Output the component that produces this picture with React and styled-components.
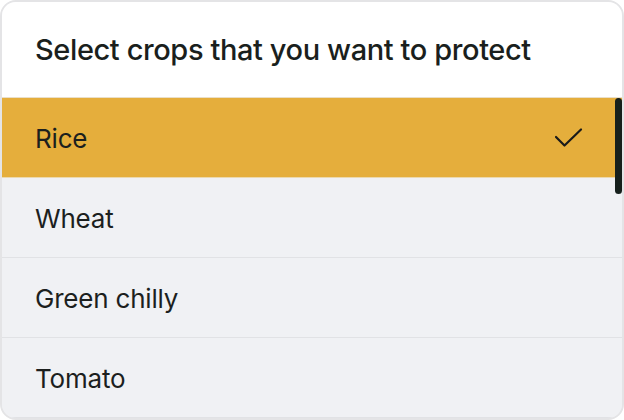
import React from 'react'
import styled, { createGlobalStyle } from 'styled-components';

const GlobalStyle = createGlobalStyle`
  html, body {
    margin: 0;
    padding: 0;
    background: #ffffff;
  }
  body {
    font-family: Inter, "Noto Sans", sans-serif;
    -webkit-font-smoothing: antialiased;
  }
`;

const Card = styled.div`
  width: 624px;
  height: 420px;
  box-sizing: border-box;
  border: 2px solid #e4e4e6;
  border-radius: 16px;
  overflow: hidden;
  display: flex;
  flex-direction: column;
  background: #f0f1f4;
`;

const Header = styled.div`
  height: 95px;
  flex-shrink: 0;
  background: #ffffff;
  border-bottom: 1px solid #eadfc9;
  display: flex;
  align-items: center;
  padding: 0 33px;
`;

const Title = styled.h1`
  margin: 0;
  font-size: 29px;
  font-weight: 500;
  letter-spacing: -0.4px;
  color: #1a1f1d;
`;

const List = styled.div`
  position: relative;
  flex: 1;
  display: flex;
  flex-direction: column;
`;

const Option = styled.div`
  height: 80px;
  box-sizing: border-box;
  flex-shrink: 0;
  display: flex;
  align-items: center;
  justify-content: space-between;
  padding: 1px 38px 0 33px;
  background: ${p => (p.$selected ? '#e5ae3c' : '#f0f1f4')};
  border-bottom: 1px solid ${p => (p.$selected ? '#ecd9ae' : '#e1e2e5')};
  &:last-child {
    border-bottom: none;
  }
`;

const Label = styled.span`
  font-size: 26px;
  font-weight: 400;
  letter-spacing: -0.2px;
  color: #1c1f1e;
`;

const Scrollbar = styled.div`
  position: absolute;
  top: 0;
  right: 0;
  width: 7px;
  height: 96px;
  border-radius: 4px;
  background: #16201c;
`;

const CheckIcon = () => (
  <svg width="30" height="22" viewBox="0 0 30 22" fill="none">
    <polyline
      points="2,10 10.5,18.5 27,2.5"
      stroke="#1a1a1a"
      strokeWidth="2.2"
      strokeLinecap="round"
      strokeLinejoin="round"
    />
  </svg>
);

const crops = ['Rice', 'Wheat', 'Green chilly', 'Tomato'];

export default function App() {
  const [selected] = React.useState('Rice');
  return (
    <>
      <GlobalStyle />
      <Card>
        <Header>
          <Title>Select crops that you want to protect</Title>
        </Header>
        <List>
          {crops.map(crop => (
            <Option key={crop} $selected={crop === selected}>
              <Label>{crop}</Label>
              {crop === selected && <CheckIcon />}
            </Option>
          ))}
          <Scrollbar />
        </List>
      </Card>
    </>
  )
}
